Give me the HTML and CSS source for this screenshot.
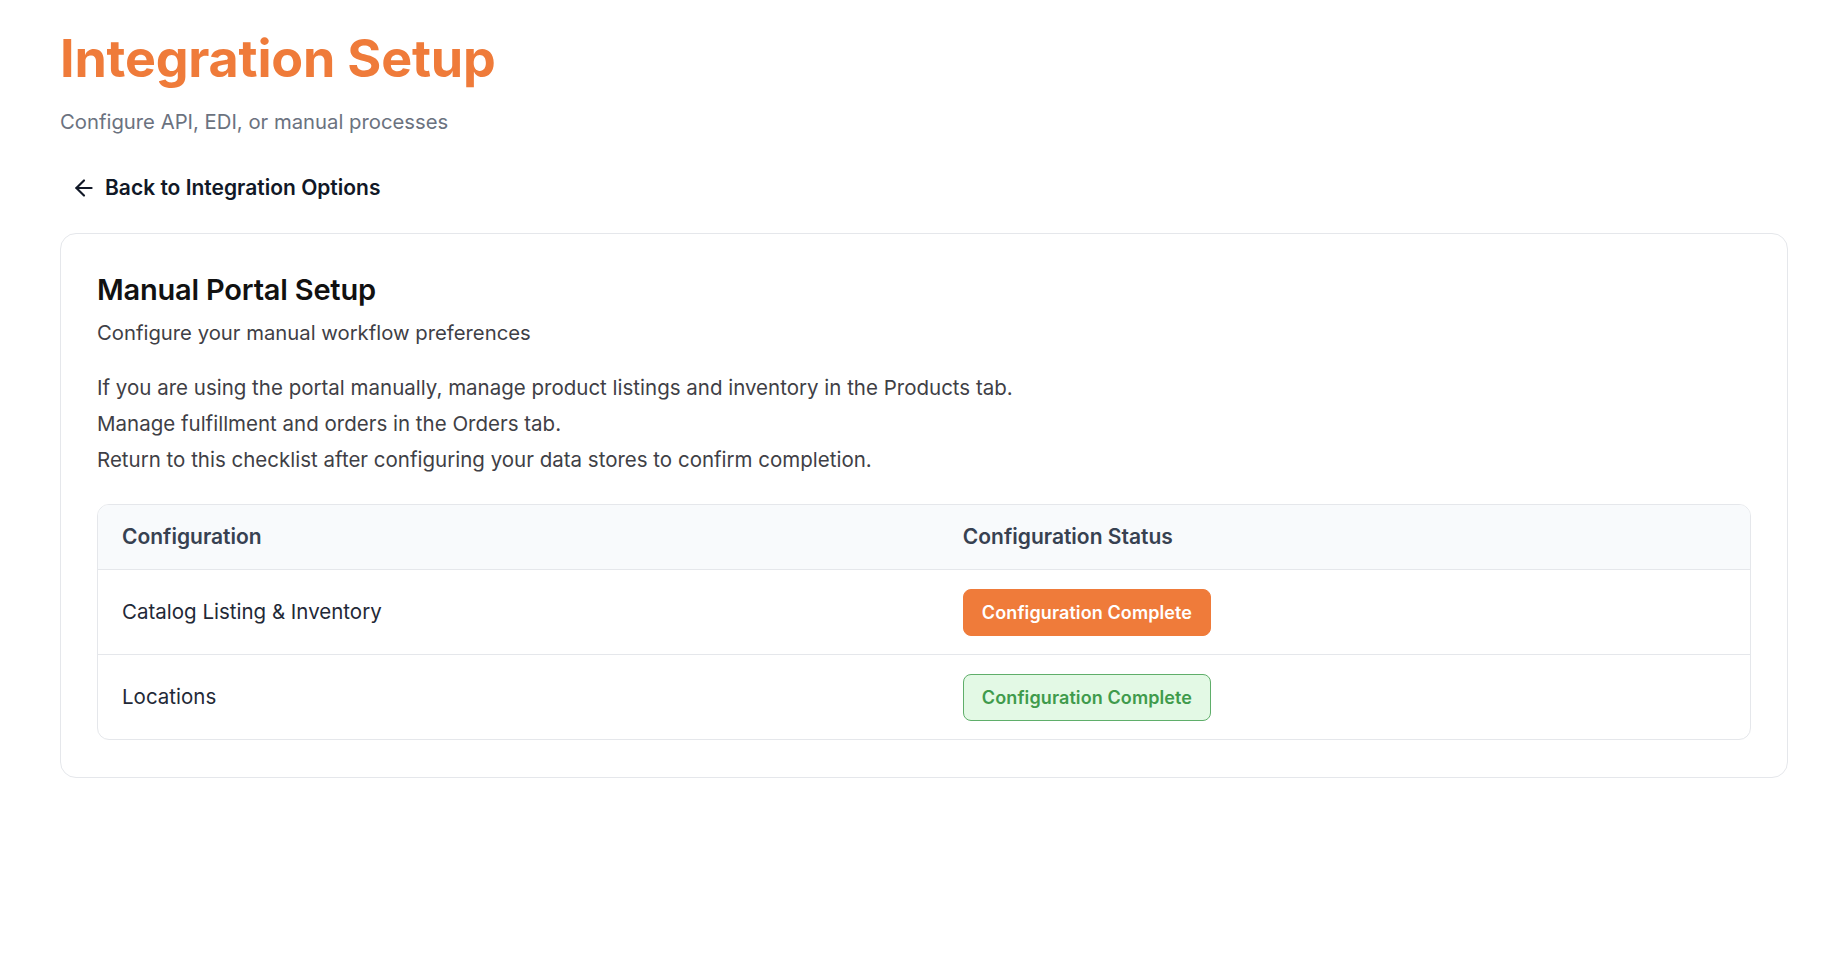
FILE: index.html
```html
<!DOCTYPE html>
<html lang="en">
<head>
<meta charset="utf-8">
<title>Integration Setup</title>
<link rel="stylesheet" href="styles.css">
</head>
<body>
<main class="page">
  <header class="page-header">
    <h1 class="page-title">Integration Setup</h1>
    <p class="page-subtitle">Configure API, EDI, or manual processes</p>
  </header>

  <a class="back-link" href="#">
    <svg class="back-icon" viewBox="0 0 24 24" fill="none" stroke="currentColor" stroke-width="2" stroke-linecap="round" stroke-linejoin="round" aria-hidden="true">
      <path d="m12 19-7-7 7-7"/>
      <path d="M19 12H5"/>
    </svg>
    <span>Back to Integration Options</span>
  </a>

  <section class="card">
    <h2 class="card-title">Manual Portal Setup</h2>
    <p class="card-desc">Configure your manual workflow preferences</p>

    <div class="instructions">
      <p>If you are using the portal manually, manage product listings and inventory in the Products tab.</p>
      <p>Manage fulfillment and orders in the Orders tab.</p>
      <p>Return to this checklist after configuring your data stores to confirm completion.</p>
    </div>

    <div class="table-wrap">
      <table class="config-table">
        <thead>
          <tr>
            <th class="col-name">Configuration</th>
            <th>Configuration Status</th>
          </tr>
        </thead>
        <tbody>
          <tr>
            <td>Catalog Listing &amp; Inventory</td>
            <td><button class="status-btn status-btn--primary" type="button">Configuration Complete</button></td>
          </tr>
          <tr>
            <td>Locations</td>
            <td><button class="status-btn status-btn--done" type="button">Configuration Complete</button></td>
          </tr>
        </tbody>
      </table>
    </div>
  </section>
</main>
</body>
</html>
```

FILE: styles.css
```css
* {
  box-sizing: border-box;
}

html, body {
  margin: 0;
  background: #ffffff;
}

body {
  font-family: Inter, "Noto Sans", "Liberation Sans", sans-serif;
  color: #111827;
  -webkit-font-smoothing: antialiased;
}

.page {
  padding: 29px 38px 40px 60px;
}

/* Heading block */
.page-title {
  margin: 0;
  font-size: 52px;
  line-height: 60px;
  font-weight: 700;
  color: #ef7b3a;
  letter-spacing: -0.2px;
}

.page-subtitle {
  margin: 19px 0 0;
  font-size: 20.3px;
  line-height: 28px;
  color: #6b7280;
}

/* Back navigation */
.back-link {
  display: flex;
  width: fit-content;
  align-items: center;
  gap: 8px;
  margin: 38px 0 0 11px;
  font-size: 21px;
  line-height: 28px;
  font-weight: 600;
  color: #111827;
  text-decoration: none;
}

.back-icon {
  width: 26px;
  height: 26px;
  flex: none;
}

/* Card */
.card {
  margin-top: 31px;
  border: 1px solid #e5e7eb;
  border-radius: 16px;
  padding: 38px 36px 37px 36px;
  background: #ffffff;
}

.card-title {
  margin: 0;
  font-size: 29px;
  line-height: 36px;
  font-weight: 600;
  color: #111111;
  letter-spacing: -0.2px;
}

.card-desc {
  margin: 11px 0 0;
  font-size: 20.3px;
  line-height: 28px;
  color: #3f3f46;
}

.instructions {
  margin-top: 27px;
  display: flex;
  flex-direction: column;
  gap: 8px;
}

.instructions p {
  margin: 0;
  font-size: 20.5px;
  line-height: 28px;
  color: #3f3f46;
}

/* Configuration table */
.table-wrap {
  margin-top: 30px;
  border: 1px solid #e5e7eb;
  border-radius: 12px;
  overflow: hidden;
}

.config-table {
  width: 100%;
  border-collapse: collapse;
  table-layout: fixed;
}

.config-table .col-name {
  width: 50.9%;
}

.config-table th,
.config-table td {
  padding: 18px 24px;
  text-align: left;
  font-size: 20.5px;
  line-height: 28px;
  vertical-align: middle;
}

.config-table th {
  background: #f8fafc;
  font-size: 21px;
  font-weight: 600;
  color: #374151;
  border-bottom: 1px solid #e5e7eb;
}

.config-table td {
  color: #1f2937;
  padding-top: 18.5px;
  padding-bottom: 18.5px;
}

.config-table tbody tr + tr td {
  border-top: 1px solid #e5e7eb;
}

/* Status buttons */
.status-btn {
  display: inline-flex;
  align-items: center;
  height: 47px;
  padding: 0 18px;
  border-radius: 8px;
  font-family: inherit;
  font-size: 18px;
  font-weight: 600;
  letter-spacing: 0.1px;
  cursor: pointer;
}

.status-btn--primary {
  background: #ef7b3a;
  border: 1px solid #ef7b3a;
  color: #ffffff;
}

.status-btn--done {
  background: #e3f9e5;
  border: 1px solid #5fae6a;
  color: #3f9b4c;
}
```
